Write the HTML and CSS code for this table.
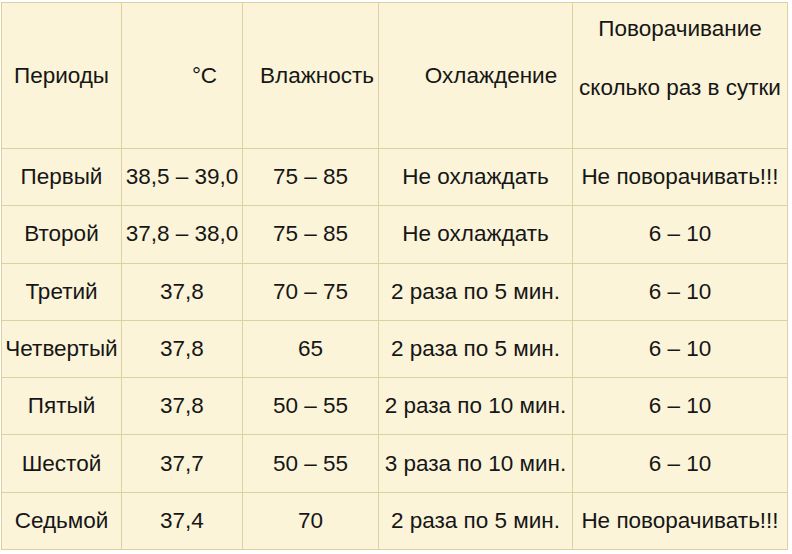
FILE: index.html
```html
<!DOCTYPE html>
<html lang="ru">
<head>
<meta charset="utf-8">
<link rel="stylesheet" href="styles.css">
</head>
<body>
<table class="grid">
  <colgroup>
    <col class="c1"><col class="c2"><col class="c3"><col class="c4"><col class="c5">
  </colgroup>
  <thead>
    <tr class="head">
      <th>Периоды</th>
      <th class="h-deg">°C</th>
      <th class="h-hum">Влажность</th>
      <th class="h-cool">Охлаждение</th>
      <th class="h-turn"><p>Поворачивание</p><p>сколько раз в сутки</p></th>
    </tr>
  </thead>
  <tbody>
    <tr><td>Первый</td><td>38,5 – 39,0</td><td>75 – 85</td><td>Не охлаждать</td><td>Не поворачивать!!!</td></tr>
    <tr><td>Второй</td><td>37,8 – 38,0</td><td>75 – 85</td><td>Не охлаждать</td><td>6 – 10</td></tr>
    <tr><td>Третий</td><td>37,8</td><td>70 – 75</td><td>2 раза по 5 мин.</td><td>6 – 10</td></tr>
    <tr><td>Четвертый</td><td>37,8</td><td>65</td><td>2 раза по 5 мин.</td><td>6 – 10</td></tr>
    <tr><td>Пятый</td><td>37,8</td><td>50 – 55</td><td>2 раза по 10 мин.</td><td>6 – 10</td></tr>
    <tr><td>Шестой</td><td>37,7</td><td>50 – 55</td><td>3 раза по 10 мин.</td><td>6 – 10</td></tr>
    <tr><td>Седьмой</td><td>37,4</td><td>70</td><td>2 раза по 5 мин.</td><td>Не поворачивать!!!</td></tr>
  </tbody>
</table>
</body>
</html>
```
FILE: styles.css
```css
html, body {
  margin: 0;
  padding: 0;
  background: #ffffff;
}
body {
  padding: 2px 0 0 1px;
  font-family: "Liberation Sans", Arial, sans-serif;
  color: #161616;
}
.grid {
  border-collapse: collapse;
  table-layout: fixed;
  width: 786px;
  background: #fbf4d9;
  font-size: 22.5px;
}
.c1 { width: 120px; }
.c2 { width: 121px; }
.c3 { width: 136px; }
.c4 { width: 194px; }
.c5 { width: 215px; }
.grid th, .grid td {
  border: 1px solid #ddd0a2;
  padding: 0;
  text-align: center;
  vertical-align: middle;
  font-weight: normal;
  line-height: 26px;
  white-space: nowrap;
}
.head { height: 146px; }
.grid tbody tr { height: 57.3px; }
.h-deg { padding-left: 45px !important; }
.h-hum { padding-left: 13px !important; }
.h-cool { padding-left: 31px !important; }
.h-turn {
  vertical-align: top !important;
  padding-top: 13px !important;
}
.h-turn p {
  margin: 0 0 33px 0;
}
```
